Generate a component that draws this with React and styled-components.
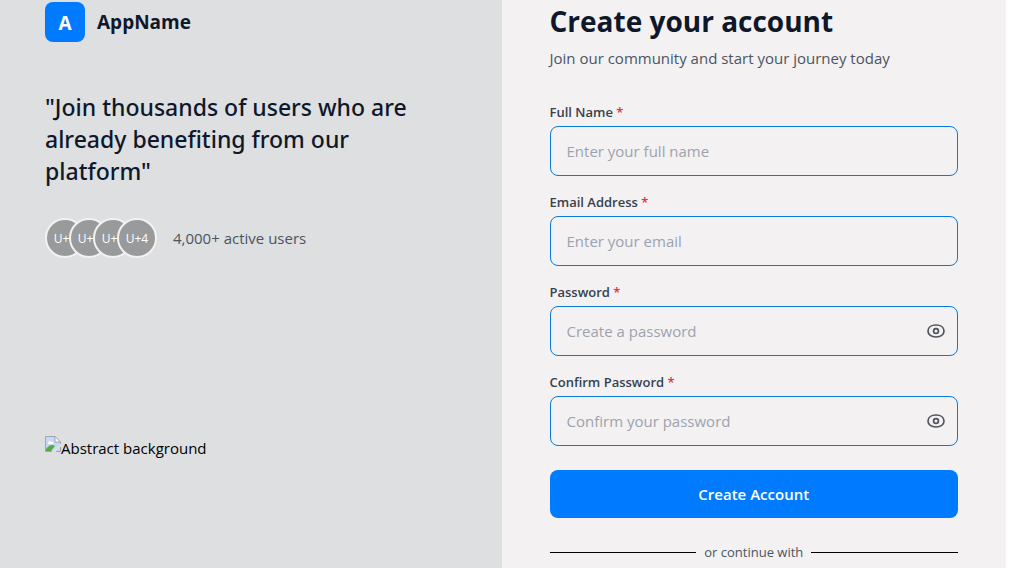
import { useState } from "react";
import styled, { createGlobalStyle } from "styled-components";

const fields = [
	{ id: "name", label: "Full Name", placeholder: "Enter your full name", type: "text" },
	{ id: "email", label: "Email Address", placeholder: "Enter your email", type: "email" },
	{ id: "password", label: "Password", placeholder: "Create a password", type: "password" },
	{ id: "confirm", label: "Confirm Password", placeholder: "Confirm your password", type: "password" },
];

const avatars = ["U+1", "U+2", "U+3", "U+4"];

function Field({ id, label, placeholder, type }) {
	const [visible, setVisible] = useState(false);
	const isPassword = type === "password";

	return (
		<FieldGroup>
			<Label htmlFor={id}>
				{label} <Required>*</Required>
			</Label>
			<InputBox>
				<Input
					id={id}
					name={id}
					type={visible ? "text" : type}
					placeholder={placeholder}
				/>
				{isPassword && (
					<EyeButton
						type="button"
						aria-label="Toggle password visibility"
						onClick={() => setVisible(!visible)}
					>
						<EyeIcon />
					</EyeButton>
				)}
			</InputBox>
		</FieldGroup>
	);
}

function EyeIcon() {
	return (
		<svg width="20" height="20" viewBox="0 0 20 20" fill="none" stroke="#50555d" strokeWidth="1.7">
			<path d="M2 10C2 6.2 5.4 4 10 4S18 6.2 18 10S14.6 16 10 16S2 13.8 2 10Z" />
			<circle cx="10" cy="10" r="2.4" />
		</svg>
	);
}

function BrokenImageIcon() {
	return (
		<svg width="16" height="16" viewBox="0 0 16 16">
			<path d="M1 1H10L15 6V15H1Z" fill="#c6d8f4" />
			<path d="M3 7C3 5 6 5 6 6C8 5 9 7 8 8H3Z" fill="#fff" />
			<path d="M1 15V13C4 9 7 8 10 10L6 15Z" fill="#5aa842" />
			<path d="M7 16L16 7V10L10 16Z" fill="#dddfe0" />
			<path d="M10 1V6H15Z" fill="#fff" />
			<path d="M.5 15.5V.5H10L15.5 6V8M.5 15.5H7M11 15.5H15.5V11M10 .5V6H15.5" fill="none" stroke="#a0a5ab" />
		</svg>
	);
}

export default function App() {
	return (
		<Page>
			<GlobalStyle />
			<Intro>
				<Brand>
					<Logo>A</Logo>
					<BrandName>AppName</BrandName>
				</Brand>
				<Quote>"Join thousands of users who are already benefiting from our platform"</Quote>
				<Community>
					<AvatarList>
						{avatars.map((name) => (
							<Avatar key={name}>{name}</Avatar>
						))}
					</AvatarList>
					<UserCount>4,000+ active users</UserCount>
				</Community>
				<Artwork>
					<BrokenImageIcon />
					<span>Abstract background</span>
				</Artwork>
			</Intro>
			<SignUp>
				<Title>Create your account</Title>
				<Subtitle>Join our community and start your journey today</Subtitle>
				<Form onSubmit={(event) => event.preventDefault()}>
					{fields.map((field) => (
						<Field key={field.id} {...field} />
					))}
					<SubmitButton type="submit">Create Account</SubmitButton>
				</Form>
				<Divider>or continue with</Divider>
			</SignUp>
		</Page>
	);
}

const GlobalStyle = createGlobalStyle`
	* {
		box-sizing: border-box;
	}

	body {
		margin: 0;
		background-color: #fff;
		font-family: "Open Sans", "Noto Sans", sans-serif;
		overflow: hidden;
	}

	h1, p {
		margin: 0;
	}
`;

const Page = styled.main`
	display: grid;
	grid-template-columns: 1fr 1fr;
	height: 100vh;
	margin: 0 3px 0 -3px;
	overflow: hidden;
`;

const Intro = styled.section`
	background-color: #dddfe0;
	padding: 2px 48px 0;
`;

const Brand = styled.div`
	display: flex;
	align-items: center;
	gap: 12px;
	color: #0f172a;
`;

const Logo = styled.div`
	width: 40px;
	height: 40px;
	border-radius: 8px;
	background-color: #007bff;
	color: #fff;
	font-size: 19px;
	font-weight: 700;
	line-height: 42px;
	text-align: center;
`;

const BrandName = styled.span`
	font-size: 19px;
	font-weight: 700;
	line-height: 28px;
`;

const Quote = styled.p`
	margin-top: 49px;
	max-width: 384px;
	color: #0f172a;
	font-family: "Noto Sans", "Open Sans", sans-serif;
	font-size: 23px;
	font-weight: 500;
	line-height: 32px;
`;

const Community = styled.div`
	display: flex;
	align-items: center;
	gap: 16px;
	margin-top: 31px;
`;

const AvatarList = styled.div`
	display: flex;
`;

const Avatar = styled.div`
	width: 40px;
	height: 40px;
	border: 2px solid #f3f2f3;
	border-radius: 50%;
	background-color: #999a9b;
	color: #fff;
	font-size: 12px;
	line-height: 38px;
	text-align: center;

	& + & {
		margin-left: -16px;
	}
`;

const UserCount = styled.p`
	color: #4b5563;
	font-size: 15px;
	line-height: 24px;
`;

const Artwork = styled.div`
	display: flex;
	align-items: flex-start;
	margin-top: 178px;
	color: #000;
	font-size: 15px;
	line-height: 24px;
`;

const SignUp = styled.section`
	background-color: #f3f1f2;
	padding: 1px 48px 0;
`;

const Title = styled.h1`
	color: #0f172a;
	font-size: 28px;
	font-weight: 700;
	line-height: 40px;
`;

const Subtitle = styled.p`
	margin-top: 5px;
	color: #4b5563;
	font-size: 15px;
	line-height: 24px;
`;

const Form = styled.form`
	display: flex;
	flex-direction: column;
	gap: 16px;
	margin-top: 32px;
`;

const FieldGroup = styled.div`
	display: flex;
	flex-direction: column;
	gap: 4px;
`;

const Label = styled.label`
	color: #374151;
	font-size: 13px;
	font-weight: 600;
	line-height: 20px;
`;

const Required = styled.span`
	color: #dc3838;
`;

const InputBox = styled.div`
	display: flex;
	align-items: center;
	height: 50px;
	padding-right: 11px;
	border: 1px solid #087bdc;
	border-radius: 8px;
`;

const Input = styled.input`
	flex: 1;
	min-width: 0;
	height: 100%;
	padding: 0 16px;
	border: none;
	outline: none;
	background: transparent;
	color: #0f172a;
	font-family: inherit;
	font-size: 15px;

	&::placeholder {
		color: #9ca3af;
	}
`;

const EyeButton = styled.button`
	display: flex;
	padding: 0;
	border: none;
	background: none;
	cursor: pointer;
`;

const SubmitButton = styled.button`
	height: 48px;
	margin-top: 8px;
	border: none;
	border-radius: 8px;
	background-color: #007bff;
	color: #fff;
	font-family: inherit;
	font-size: 15px;
	font-weight: 600;
	cursor: pointer;
`;

const Divider = styled.div`
	display: flex;
	align-items: center;
	gap: 8px;
	margin-top: 24px;
	color: #4b5563;
	font-size: 13px;
	line-height: 20px;

	&::before,
	&::after {
		content: "";
		flex: 1;
		height: 1px;
		background-color: #000;
	}
`;
